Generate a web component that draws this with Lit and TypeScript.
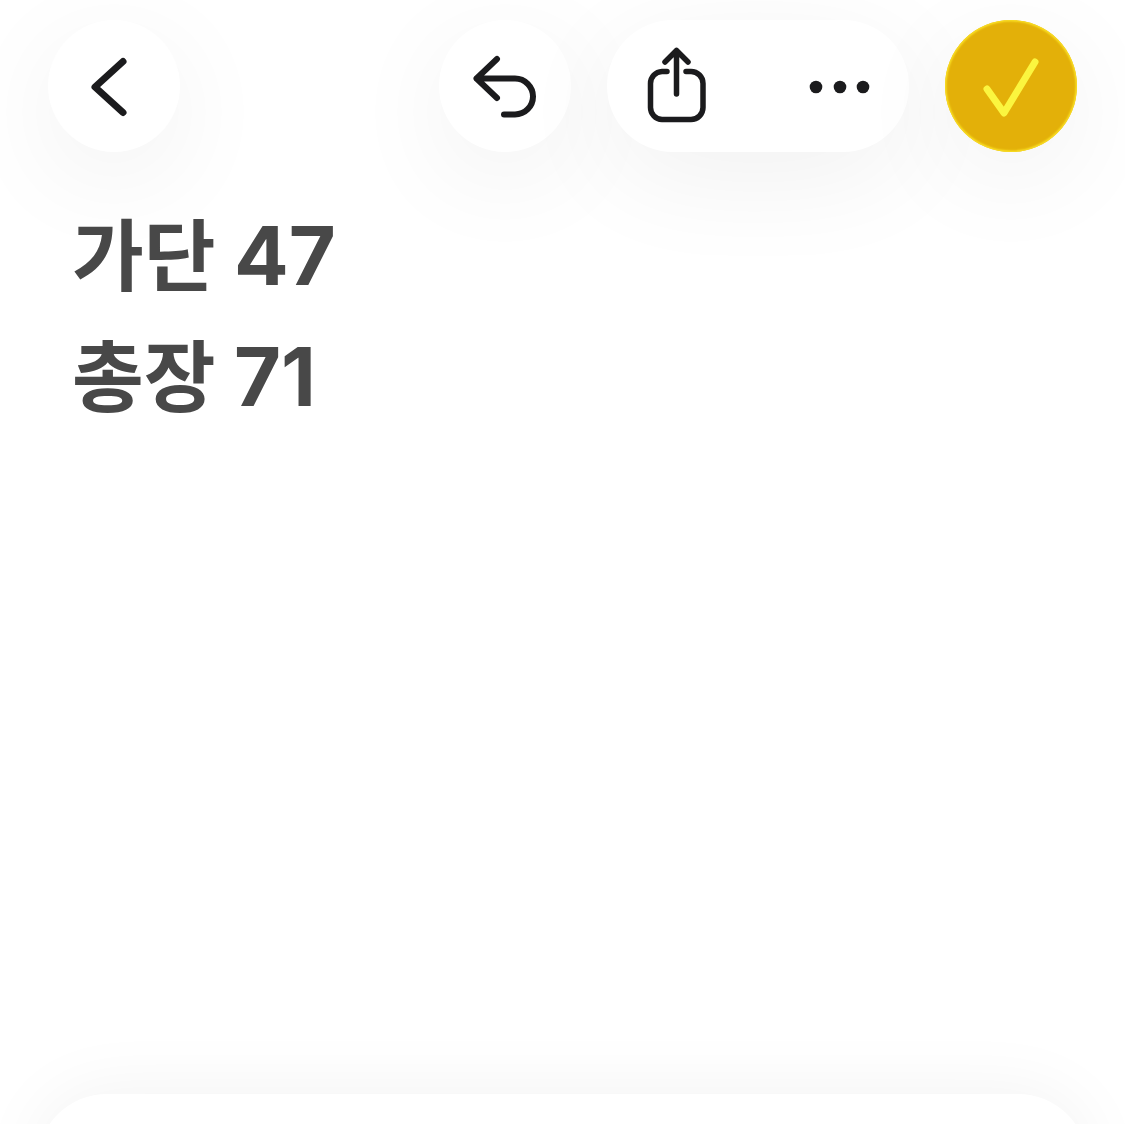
import { LitElement, html, css } from "lit";
import { customElement } from "lit/decorators.js";

@customElement("app-root")
export class AppRoot extends LitElement {
  static styles = css`
    :host {
      display: block;
      height: 1124px;
      overflow: hidden;
      background: #fff;
      font-family: "Inter", "Noto Sans CJK KR", sans-serif;
    }
    .page {
      height: 1124px;
      display: flex;
      flex-direction: column;
      box-sizing: border-box;
      padding: 20px 48px 0;
    }
    .bar {
      display: flex;
      align-items: center;
      height: 132px;
      flex: none;
    }
    .btn {
      height: 132px;
      border-radius: 66px;
      background: #fff;
      box-shadow: 0 26px 110px rgba(0, 0, 0, 0.06);
      display: flex;
      align-items: center;
      justify-content: center;
      flex: none;
    }
    .round { width: 132px; }
    .undo { margin-left: auto; }
    .pill {
      width: 302px;
      margin-left: 36px;
      justify-content: space-between;
      padding: 0 39px 0 41px;
      box-sizing: border-box;
    }
    .done {
      margin-left: 36px;
      background: #e3b009;
      box-shadow: 0 26px 110px rgba(0, 0, 0, 0.06), inset 0 0 2px 1.5px #fae024;
    }
    svg { display: block; overflow: visible; }
    .ink { fill: none; stroke: #1b1b1d; stroke-linecap: round; stroke-linejoin: round; }
    .check { fill: none; stroke: #fbf53f; stroke-width: 7; stroke-linecap: round; stroke-linejoin: round; }
    .dot { fill: #1b1b1d; }
    .notes {
      margin: 44px 0 0 24px;
      color: #484848;
      font-size: 78px;
      font-weight: 700;
      line-height: 121px;
      flex: none;
    }
    .notes div { height: 121px; white-space: nowrap; }
    .num { font-size: 81px; }
    .sheet {
      margin: auto -11px -70px;
      height: 100px;
      flex: none;
      background: #fff;
      border-radius: 70px 70px 0 0;
      box-shadow: 0 -4px 70px rgba(0, 0, 0, 0.05);
    }
  `;

  render() {
    return html`
      <div class="page">
        <div class="bar">
          <div class="btn round">
            <svg width="132" height="132" viewBox="0 0 132 132">
              <path class="ink" stroke-width="7" d="M75 41.5 L47 67 L75 92.5" />
            </svg>
          </div>
          <div class="btn round undo">
            <svg width="132" height="132" viewBox="0 0 132 132">
              <path class="ink" stroke-width="6" d="M58 39 L37.5 58.5 L58 78 M37.5 58.5 H76 A18 18 0 0 1 76 94.5 H65" />
            </svg>
          </div>
          <div class="btn pill">
            <svg width="58" height="76" viewBox="0 0 58 76">
              <path class="ink" stroke-width="5.5" d="M19 23.5 H14 A12 12 0 0 0 2.5 35.5 V59.5 A12 12 0 0 0 14 71.5 H43 A12 12 0 0 0 55 59.5 V35.5 A12 12 0 0 0 43 23.5 H38 M28.5 2.5 V46 M17 14 L28.5 2.5 L40 14" />
            </svg>
            <svg width="60" height="14" viewBox="0 0 60 14">
              <circle class="dot" cx="6" cy="8" r="6.3" />
              <circle class="dot" cx="30" cy="8" r="6.3" />
              <circle class="dot" cx="53" cy="8" r="6.3" />
            </svg>
          </div>
          <div class="btn round done">
            <svg width="132" height="132" viewBox="0 0 132 132">
              <path class="check" d="M42 69 L59 93 L90 42" />
            </svg>
          </div>
        </div>
        <div class="notes">
          <div>가단 <span class="num">47</span></div>
          <div>총장 <span class="num">71</span></div>
        </div>
        <div class="sheet"></div>
      </div>
    `;
  }
}
